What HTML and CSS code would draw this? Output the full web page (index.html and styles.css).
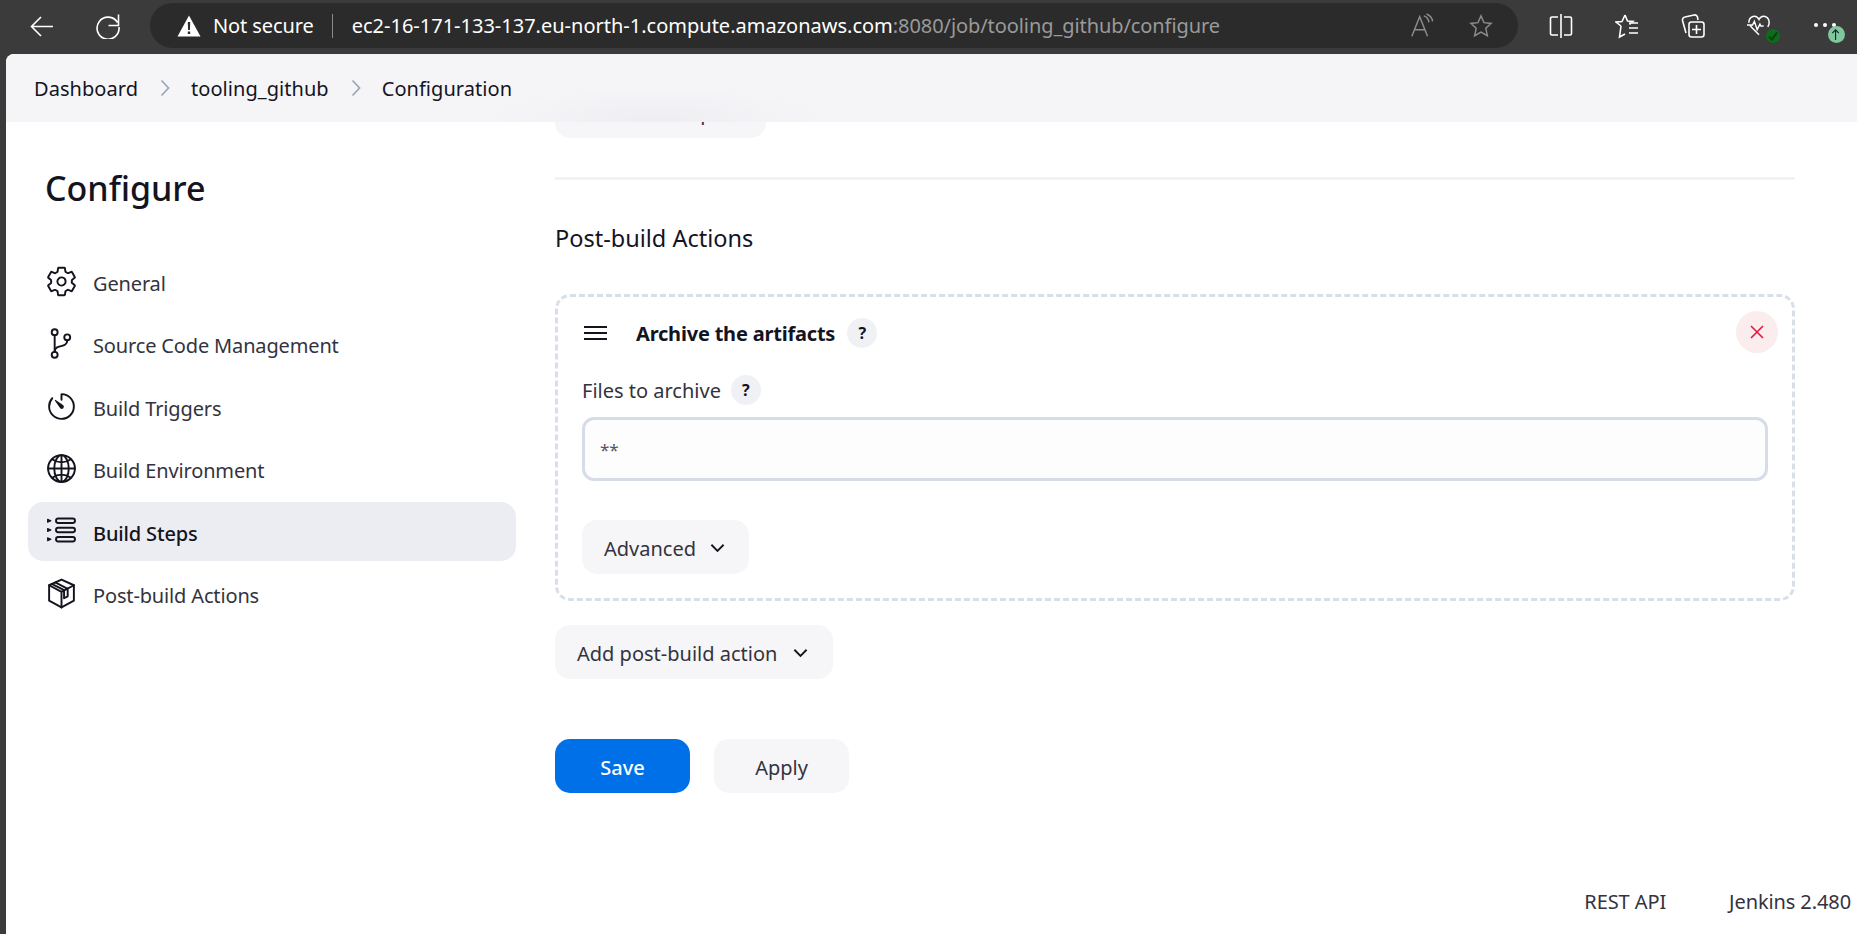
FILE: index.html
```html
<!DOCTYPE html>
<html lang="en">
<head>
<meta charset="utf-8">
<title>tooling_github Config</title>
<link rel="stylesheet" href="styles.css">
</head>
<body>
<header class="toolbar">
  <svg class="tool back" viewBox="0 0 24 24"><path d="M23 12.500H2M11 3l-9.500 9.500L11 22"/></svg>
  <svg class="tool refresh" viewBox="0 0 24 26"><path d="M22.500 1.500V12.500H12.500M21.500 9.500A11 11 0 1 0 23 14"/></svg>
  <div class="address">
    <svg class="warn" viewBox="0 0 24 22"><path class="warn-tri" d="M12 0.500 23.500 21.500H0.500Z"/><path class="warn-mark" d="M10.800 7h2.400l-.3 8h-1.800zM10.800 16.500h2.400v2.500h-2.400z"/></svg>
    <span class="secure">Not secure</span>
    <span class="sep"></span>
    <span class="url">ec2-16-171-133-137.eu-north-1.compute.amazonaws.com<span class="url-path">:8080/job/tooling_github/configure</span></span>
    <svg class="tool dim read" viewBox="0 0 26 26"><path d="M2 24 10.500 3 19 24M5 17h11M15 2c3 1 5 3 5.500 7M18 0c3.500 1.500 6 4 6.500 8"/></svg>
    <svg class="tool dim star" viewBox="0 0 26 26"><path d="M13 2l3.300 7.400 7.700.8-5.800 5.300 1.700 8L13 19.500 6.100 23.500l1.700-8L2 10.200l7.700-.8z"/></svg>
  </div>
  <svg class="tool split" viewBox="0 0 24 26"><path d="M9 4H3a1.500 1.500 0 0 0-1.500 1.500v15A1.500 1.500 0 0 0 3 22h6M15 4h6a1.500 1.500 0 0 1 1.500 1.500v15A1.500 1.500 0 0 1 21 22h-6M12 1v24"/></svg>
  <svg class="tool gap-tool" viewBox="0 0 24 26"><path d="M10 2l2.500 6 5.500.5-3.500 3M6 13l-5-4 6-.5L10 2M6 13l-1.500 11L10 21M14 10h9M14 15h9M14 20h9"/></svg>
  <svg class="tool gap-tool" viewBox="0 0 24 26"><path d="M5 20 1.500 7.500A3 3 0 0 1 4 4l9-2a3 3 0 0 1 3.500 2l.5 3"/><rect x="8" y="9" width="15" height="15" rx="2.500"/><path d="M15.500 12v9M11 16.500h9"/></svg>
  <span class="health">
    <svg class="tool" viewBox="0 0 26 26"><path d="M2 9.500C2 2 10 0 13 6c3-6 11-4 11 3.500 0 1.500-.5 3-1.500 4.500M3 11.500c0 0 1 2 3 4l7 7M0 12h6l2-4 3 9 3-6 1 2h3"/></svg>
    <span class="badge-ok"><svg viewBox="0 0 12 12"><path d="M2.500 6.500 5 9l4.500-6"/></svg></span>
  </span>
  <span class="more">
    <span class="dots"><i></i><i></i><i></i></span>
    <span class="badge-up"><svg viewBox="0 0 12 14"><path d="M6 13V2M2.500 5.500 6 2l3.500 3.500"/></svg></span>
  </span>
</header>

<div class="page">
  <nav class="crumbs">
    <span class="crumb">Dashboard</span>
    <svg class="crumb-sep" viewBox="0 0 10 18"><path d="M1.500 1.500 8.500 9l-7 7.500"/></svg>
    <span class="crumb">tooling_github</span>
    <svg class="crumb-sep" viewBox="0 0 10 18"><path d="M1.500 1.500 8.500 9l-7 7.500"/></svg>
    <span class="crumb">Configuration</span>
  </nav>

  <div class="layout">
    <aside class="sidebar">
      <h1 class="title">Configure</h1>
      <ul class="menu">
        <li class="item">
          <svg class="ico" viewBox="0 0 512 512"><path d="M262.290 192.310a64 64 0 1057.400 57.400 64.130 64.130 0 00-57.400-57.400zM416.390 256a154.340 154.340 0 01-1.530 20.790l45.210 35.460a10.810 10.810 0 012.450 13.750l-42.770 74a10.810 10.810 0 01-13.140 4.590l-44.900-18.080a16.110 16.110 0 00-15.170 1.750A164.480 164.480 0 01325 400.800a15.940 15.940 0 00-8.820 12.140l-6.730 47.890a11.080 11.080 0 01-10.680 9.170h-85.540a11.110 11.110 0 01-10.690-8.870l-6.720-47.820a16.070 16.070 0 00-9-12.220 155.300 155.300 0 01-21.460-12.570 16 16 0 00-15.110-1.710l-44.890 18.070a10.810 10.810 0 01-13.140-4.580l-42.770-74a10.800 10.800 0 012.450-13.750l38.210-30a16.050 16.050 0 006.070-14.080c-.36-4.170-.58-8.330-.58-12.500s.21-8.270.58-12.350a16 16 0 00-6.070-13.940l-38.190-30A10.810 10.810 0 0149.480 186l42.770-74a10.810 10.810 0 0113.140-4.590l44.900 18.080a16.110 16.110 0 0015.170-1.750A164.480 164.480 0 01187 111.200a15.940 15.940 0 008.820-12.140l6.730-47.890A11.080 11.080 0 01213.230 42h85.540a11.110 11.110 0 0110.690 8.870l6.720 47.820a16.070 16.070 0 009 12.220 155.300 155.300 0 0121.460 12.570 16 16 0 0015.110 1.710l44.890-18.070a10.810 10.810 0 0113.140 4.580l42.770 74a10.800 10.800 0 01-2.450 13.750l-38.210 30a16.050 16.050 0 00-6.070 14.080c.33 4.140.55 8.300.55 12.470z"/></svg>
          General
        </li>
        <li class="item">
          <svg class="ico" viewBox="0 0 512 512"><circle cx="150" cy="80" r="46"/><circle cx="150" cy="432" r="46"/><path d="M150 384V128"/><circle cx="345" cy="160" r="46"/><path d="M345 208c0 128-195 48-195 176"/></svg>
          Source Code Management
        </li>
        <li class="item">
          <svg class="ico" viewBox="0 0 512 512"><path d="M112.910 128A191.850 191.850 0 0064 254c-1.180 106.350 85.650 193.800 192 194 106.200.2 192-85.830 192-192 0-104.540-83.550-189.610-187.500-192a4.360 4.360 0 00-4.500 4.370V152"/><path class="solid" d="M233.380 278.630l-79-113a8.130 8.130 0 0111.320-11.320l113 79a32.500 32.500 0 01-37.250 53.260 33.210 33.210 0 01-8-7.940z"/></svg>
          Build Triggers
        </li>
        <li class="item">
          <svg class="ico" viewBox="0 0 512 512"><path d="M256 48C141.130 48 48 141.130 48 256s93.130 208 208 208 208-93.130 208-208S370.870 48 256 48z"/><path d="M256 48c-58.070 0-112.670 93.310-112.670 208S197.930 464 256 464s112.670-93.310 112.670-208S314.070 48 256 48z"/><path d="M117.330 117.330c38.240 27.150 86.380 43.340 138.670 43.340s100.430-16.190 138.670-43.340M394.670 394.670c-38.240-27.150-86.380-43.340-138.670-43.340s-100.430 16.190-138.670 43.340M256 48v416M464 256H48"/></svg>
          Build Environment
        </li>
        <li class="item active">
          <svg class="ico" viewBox="0 0 512 512"><rect x="171" y="55" width="294" height="68" rx="34"/><rect x="171" y="199" width="294" height="68" rx="34"/><rect x="171" y="342" width="294" height="68" rx="34"/><path class="tri" d="M40 66l52 23-52 23zM40 210l52 23-52 23zM40 353l52 23-52 23z"/></svg>
          Build Steps
        </li>
        <li class="item">
          <svg class="ico" viewBox="0 0 512 512"><path d="M256 40 448 128V368L256 472 64 368V128Z"/><path d="M64 128 256 232 448 128M256 232V472M160 84 352 184V300L296 330V205L104 108"/></svg>
          Post-build Actions
        </li>
      </ul>
    </aside>

    <main class="form">
      <button class="btn step" type="button">Add build step<svg class="chev" viewBox="0 0 16 10"><path d="M1.500 1.500 8 8l6.500-6.500"/></svg></button>
      <hr class="rule">
      <h2 class="section">Post-build Actions</h2>

      <section class="action">
        <div class="action-head">
          <svg class="handle" viewBox="0 0 23 14"><path d="M0 1h23M0 7h23M0 13h23"/></svg>
          <span class="action-title">Archive the artifacts</span>
          <span class="help head-help">?</span>
          <span class="remove"><svg viewBox="0 0 14 14"><path d="M1 1l12 12M13 1 1 13"/></svg></span>
        </div>
        <div class="field-label">Files to archive <span class="help">?</span></div>
        <input class="input" type="text" value="**">
        <button class="btn adv" type="button">Advanced<svg class="chev" viewBox="0 0 16 10"><path d="M1.500 1.500 8 8l6.500-6.500"/></svg></button>
      </section>

      <button class="btn add" type="button">Add post-build action<svg class="chev" viewBox="0 0 16 10"><path d="M1.500 1.500 8 8l6.500-6.500"/></svg></button>

      <div class="actions">
        <button class="btn wide primary" type="button">Save</button>
        <button class="btn wide" type="button">Apply</button>
      </div>
    </main>
  </div>

  <footer class="foot">
    <span>REST API</span>
    <span>Jenkins 2.480</span>
  </footer>
</div>
</body>
</html>
```
FILE: styles.css
```css
* { box-sizing: border-box; }
html, body { height: 100%; margin: 0; overflow: hidden; }
body {
  display: flex;
  flex-direction: column;
  background: #3b3b3b;
  color: #14141f;
  font-family: "Noto Sans", "Open Sans", sans-serif;
  font-size: 20px;
}

/* browser chrome */
.toolbar {
  flex: none;
  height: 54px;
  display: flex;
  align-items: center;
  padding: 0 0 3px 30px;
  color: #fff;
}
.tool {
  flex: none;
  width: 24px;
  height: 26px;
  fill: none;
  stroke: currentColor;
  stroke-width: 1.6;
}
.refresh { margin-left: 42px; }
.address {
  flex: none;
  width: 1368px;
  height: 45px;
  margin-left: 30px;
  padding: 0 25px 0 27px;
  display: flex;
  align-items: center;
  background: #2b2b2b;
  border-radius: 23px;
}
.warn { flex: none; width: 24px; height: 22px; }
.warn-tri { fill: #fff; }
.warn-mark { fill: #2b2b2b; }
.secure { margin-left: 12px; font-size: 20px; letter-spacing: -0.1px; }
.sep { width: 1px; height: 24px; margin: 0 19px 0 18px; background: #8a8a8a; }
.url { font-size: 20px; white-space: nowrap; }
.url-path { color: #9a9a9a; letter-spacing: -0.08px; }
.dim { color: #8c8c8c; }
.read { margin-left: auto; }
.star { margin-left: 35px; }
.split { margin-left: 31px; }
.gap-tool { margin-left: 42px; }
.health { position: relative; flex: none; display: flex; margin-left: 42px; }
.badge-ok {
  position: absolute;
  right: -9px;
  bottom: -4px;
  width: 14px;
  height: 14px;
  display: flex;
  border-radius: 50%;
  background: #0f6b1c;
}
.badge-ok svg { fill: none; stroke: #0a3d11; stroke-width: 1.6; }
.more { position: relative; flex: none; display: flex; align-items: center; margin-left: 43px; }
.dots { display: flex; gap: 5px; margin-top: -2px; }
.dots i { width: 4px; height: 4px; border-radius: 50%; background: #fff; }
.badge-up {
  position: absolute;
  left: 14px;
  top: 1px;
  width: 17px;
  height: 17px;
  padding: 2px;
  display: flex;
  border-radius: 50%;
  background: #7ec89b;
}
.badge-up svg { fill: none; stroke: #123; stroke-width: 1.2; }

/* page */
.page {
  flex: 1;
  min-height: 0;
  margin-left: 6px;
  display: flex;
  flex-direction: column;
  background: #fff;
  border-top-left-radius: 8px;
  overflow: hidden;
}
.crumbs {
  position: relative;
  z-index: 2;
  flex: none;
  height: 68px;
  padding-left: 28px;
  display: flex;
  align-items: center;
  background: radial-gradient(ellipse 170px 34px at 650px 68px, #eeeef2, rgba(238, 238, 242, 0)), #f5f5f8;
}
.crumb { font-size: 20px; letter-spacing: 0.05px; }
.crumb-sep {
  flex: none;
  width: 10px;
  height: 18px;
  margin: 0 21px 0 22px;
  fill: none;
  stroke: #9aa9bf;
  stroke-width: 1.8;
}
.layout {
  flex: none;
  margin-top: -38px;
  display: flex;
}

/* sidebar */
.sidebar {
  flex: none;
  width: 549px;
  padding: 79px 0 0 22px;
}
.title {
  margin: 0 0 39px 17px;
  font-size: 34px;
  line-height: 50px;
  font-weight: 500;
}
.menu {
  width: 488px;
  margin: 0;
  padding: 0;
  list-style: none;
}
.item {
  height: 59px;
  margin-bottom: 3.400px;
  padding: 4px 0 0 17px;
  display: flex;
  align-items: center;
  gap: 15px;
  border-radius: 15px;
  color: #33333e;
  letter-spacing: -0.15px;
}
.item.active {
  background: #ecedf2;
  color: #14141f;
  font-weight: 500;
}
.ico {
  flex: none;
  width: 33px;
  height: 33px;
  margin-bottom: 4px;
  fill: none;
  stroke: #14141f;
  stroke-width: 30;
  stroke-linecap: round;
  stroke-linejoin: round;
}
.ico .solid { fill: #14141f; stroke: none; }
.ico .tri { fill: #14141f; stroke-width: 16; }

/* form */
.form {
  flex: none;
  width: 1240px;
}
.btn {
  height: 54px;
  padding: 2px 24px 0 22px;
  display: inline-flex;
  align-items: center;
  justify-content: center;
  border: 0;
  border-radius: 15px;
  background: #f6f6f8;
  color: #33333e;
  font: inherit;
}
.chev {
  width: 15px;
  height: 10px;
  margin-left: 16px;
  fill: none;
  stroke: #14141f;
  stroke-width: 2;
}
.step { padding-right: 23px; }
.rule {
  height: 3px;
  margin: 39px 0 43px;
  border: 0;
  background: #f2f2f5;
}
.section {
  margin: 0 0 41px;
  font-size: 23.500px;
  line-height: 30px;
  font-weight: 400;
}
.action {
  height: 307px;
  padding: 14px 24px 24px;
  border: 3px dashed #d9dfe9;
  border-radius: 15px;
}
.action-head {
  height: 42px;
  padding-left: 2px;
  display: flex;
  align-items: center;
}
.handle {
  flex: none;
  width: 23px;
  height: 14px;
  margin: 2px 29px 0 0;
  fill: none;
  stroke: #14141f;
  stroke-width: 2;
}
.action-title {
  margin-right: 12px;
  padding-top: 2px;
  font-weight: 700;
  letter-spacing: -0.2px;
}
.help {
  flex: none;
  width: 30px;
  height: 30px;
  display: inline-flex;
  align-items: center;
  justify-content: center;
  border-radius: 50%;
  background: #eff1f5;
  color: #14141f;
  font-size: 16px;
  font-weight: 700;
}
.head-help { margin-top: 2px; }
.remove {
  flex: none;
  width: 42px;
  height: 42px;
  margin: 0 -10px 0 auto;
  padding: 14px;
  display: flex;
  border-radius: 50%;
  background: #fbeced;
}
.remove svg { fill: none; stroke: #e6173a; stroke-width: 1.600; }
.field-label {
  height: 30px;
  margin-top: 22px;
  display: flex;
  align-items: center;
  gap: 10px;
  color: #33333e;
}
.input {
  display: block;
  width: 100%;
  height: 64px;
  margin-top: 12px;
  padding: 0 15px;
  border: 3px solid #d6dde8;
  border-radius: 12px;
  background: #fdfdfd;
  color: #555560;
  font: inherit;
  font-size: 17px;
  outline: none;
}
.adv { margin-top: 39px; }
.adv .chev { margin-left: 14px; }
.add { margin-top: 24px; padding-right: 25px; }
.actions {
  margin-top: 60px;
  display: flex;
  gap: 24px;
}
.wide { width: 135px; padding: 2px 0 0; }
.primary {
  background: #0070e8;
  color: #fff;
  font-weight: 500;
}

/* footer */
.foot {
  margin-top: auto;
  height: 47px;
  padding: 0 6px 18px 0;
  display: flex;
  align-items: center;
  justify-content: flex-end;
  gap: 63px;
  color: #33333e;
  letter-spacing: -0.1px;
}
```
